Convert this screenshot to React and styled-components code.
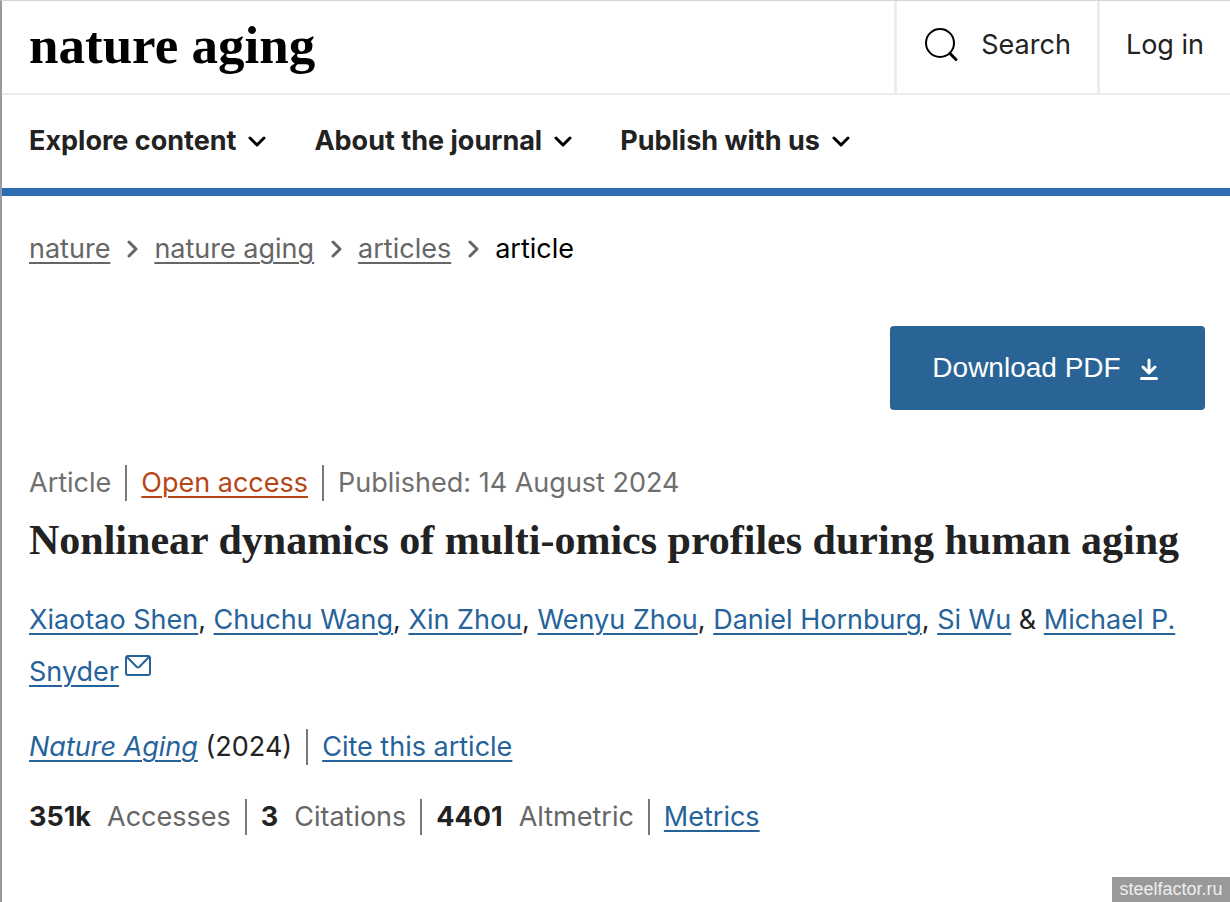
import React from "react";
import styled, { createGlobalStyle } from "styled-components";

const GlobalStyle = createGlobalStyle`
  *, *::before, *::after { box-sizing: border-box; }
  body {
    margin: 0;
    background: #fff;
    color: #222;
    font-family: Inter, "Liberation Sans", sans-serif;
    font-size: 27px;
    line-height: 36px;
  }
  button { font: inherit; color: inherit; border: 0; background: none; padding: 0; cursor: pointer; }
  svg { display: block; flex: none; }
`;

const Page = styled.div`
  position: relative;
  min-height: 100vh;
  border-top: 1px solid #d4d4d4;
  border-left: 2px solid #969ba3;
`;

const Masthead = styled.header`
  display: flex;
  height: 94px;
  border-bottom: 2px solid #ececec;
`;

const Brand = styled.a`
  margin-right: auto;
  padding: 16px 0 0 27px;
  color: #000;
  font-family: "Liberation Serif", serif;
  font-size: 53px;
  font-weight: 700;
  line-height: 56px;
  text-decoration: none;
  white-space: nowrap;
`;

const Tool = styled.a`
  display: flex;
  align-items: center;
  gap: 22px;
  padding: 0 26px 4px;
  border-left: 3px solid #ececec;
  color: #222;
  text-decoration: none;
  white-space: nowrap;
`;

const Nav = styled.nav`
  display: flex;
  align-items: center;
  gap: 48px;
  height: 101px;
  padding: 0 27px 2px;
  border-bottom: 8px solid #2e6db4;
`;

const NavButton = styled.button`
  display: flex;
  align-items: center;
  gap: 12px;
  font-weight: 700;
  white-space: nowrap;
`;

const Main = styled.main`
  padding: 35px 25px 60px 27px;
`;

const Link = styled.a`
  color: ${(p) => p.$color || "#25639a"};
  font-style: ${(p) => (p.$italic ? "italic" : "normal")};
  text-decoration: underline;
  text-decoration-thickness: 2px;
  text-underline-offset: 4px;
`;

const Crumbs = styled.nav`
  display: flex;
  align-items: center;
  gap: 15px;
  color: #000;
`;

const Actions = styled.div`
  display: flex;
  justify-content: flex-end;
  margin: 59px 0 55px;
`;

const Download = styled.button`
  display: flex;
  align-items: center;
  justify-content: center;
  gap: 18px;
  width: 315px;
  height: 84px;
  padding-right: 4px;
  border-radius: 4px;
  background: #2a6496;
  color: #fff;
  font-family: "Liberation Sans", sans-serif;
  font-size: 28px;
`;

const Row = styled.ul`
  display: flex;
  margin: 0;
  padding: 0;
  list-style: none;
  color: ${(p) => p.$color || "#222"};
`;

const Item = styled.li`
  white-space: nowrap;
  & + & {
    margin-left: 14px;
    padding-left: 14px;
    border-left: 2px solid #777;
  }
`;

const Title = styled.h1`
  margin: 13px 0 28px;
  font-family: "Liberation Serif", serif;
  font-size: 42px;
  font-weight: 700;
  line-height: 52px;
`;

const Authors = styled.p`
  margin: 0 0 31px;
  line-height: 52px;
`;

const Mail = styled.a`
  display: inline-block;
  margin-left: 6px;
  vertical-align: 5px;
  line-height: 21px;
`;

const Metrics = styled(Row)`
  margin-top: 34px;
  color: #666;
`;

const Count = styled.strong`
  margin-right: 16px;
  color: #222;
`;

const Watermark = styled.div`
  position: absolute;
  right: 0;
  bottom: 0;
  width: 118px;
  background: #999;
  color: #eee;
  font-family: "Liberation Sans", sans-serif;
  font-size: 18px;
  line-height: 25px;
  text-align: center;
`;

const ChevronDown = () => (
  <svg width="18" height="12" viewBox="0 0 18 12" fill="none" stroke="#000" strokeWidth="3" strokeLinecap="round" strokeLinejoin="round" aria-hidden="true">
    <path d="M2 3l7 7 7-7" />
  </svg>
);

const ChevronRight = () => (
  <svg width="14" height="20" viewBox="0 0 14 20" fill="none" stroke="#666" strokeWidth="3" strokeLinecap="round" strokeLinejoin="round" aria-hidden="true">
    <path d="M4 3l7 7-7 7" />
  </svg>
);

const SearchIcon = () => (
  <svg width="36" height="36" viewBox="0 0 36 36" fill="none" stroke="#000" strokeLinecap="round" aria-hidden="true">
    <circle cx="17" cy="16" r="14" strokeWidth="2" />
    <path d="M27 26.500l6 6" strokeWidth="3" />
  </svg>
);

const DownloadIcon = () => (
  <svg width="20" height="24" viewBox="0 0 20 24" fill="none" stroke="#fff" strokeWidth="3" strokeLinecap="round" strokeLinejoin="round" aria-hidden="true">
    <path d="M10 4v12.500M4 11l6 6 6-6M2.500 22.500h15" />
  </svg>
);

const MailIcon = () => (
  <svg width="26" height="21" viewBox="0 0 26 21" fill="none" stroke="#25639a" strokeWidth="2" strokeLinejoin="round" aria-hidden="true">
    <rect x="1" y="1" width="24" height="19" rx="2" />
    <path d="M2 2l9.800 10q1.200 1 2.400 0L24 2" />
  </svg>
);

const menus = ["Explore content", "About the journal", "Publish with us"];
const crumbs = ["nature", "nature aging", "articles"];
const authors = ["Xiaotao Shen", "Chuchu Wang", "Xin Zhou", "Wenyu Zhou", "Daniel Hornburg", "Si Wu"];
const metrics = [["351k", "Accesses"], ["3", "Citations"], ["4401", "Altmetric"]];

export default function App() {
  return (
    <Page>
      <GlobalStyle />
      <Masthead>
        <Brand href="#">nature aging</Brand>
        <Tool href="#search"><SearchIcon />Search</Tool>
        <Tool href="#login">Log in</Tool>
      </Masthead>
      <Nav aria-label="Journal">
        {menus.map((label) => (
          <NavButton key={label} type="button">{label}<ChevronDown /></NavButton>
        ))}
      </Nav>
      <Main>
        <Crumbs aria-label="Breadcrumb">
          {crumbs.map((label) => (
            <React.Fragment key={label}>
              <Link href="#" $color="#666">{label}</Link>
              <ChevronRight />
            </React.Fragment>
          ))}
          <span>article</span>
        </Crumbs>
        <Actions>
          <Download type="button">Download PDF<DownloadIcon /></Download>
        </Actions>
        <Row $color="#6f6f6f">
          <Item>Article</Item>
          <Item><Link href="#" $color="#b74616">Open access</Link></Item>
          <Item>Published: 14 August 2024</Item>
        </Row>
        <Title>Nonlinear dynamics of multi-omics profiles during human aging</Title>
        <Authors>
          {authors.map((name, i) => (
            <React.Fragment key={name}>
              <Link href="#">{name}</Link>{i < authors.length - 1 ? ", " : " & "}
            </React.Fragment>
          ))}
          <Link href="#">Michael P. Snyder</Link>
          <Mail href="#" aria-label="Email Michael P. Snyder"><MailIcon /></Mail>
        </Authors>
        <Row>
          <Item><Link href="#" $italic>Nature Aging</Link> (2024)</Item>
          <Item><Link href="#">Cite this article</Link></Item>
        </Row>
        <Metrics>
          {metrics.map(([count, label]) => (
            <Item key={label}><Count>{count}</Count>{label}</Item>
          ))}
          <Item><Link href="#">Metrics</Link></Item>
        </Metrics>
      </Main>
      <Watermark>steelfactor.ru</Watermark>
    </Page>
  );
}
